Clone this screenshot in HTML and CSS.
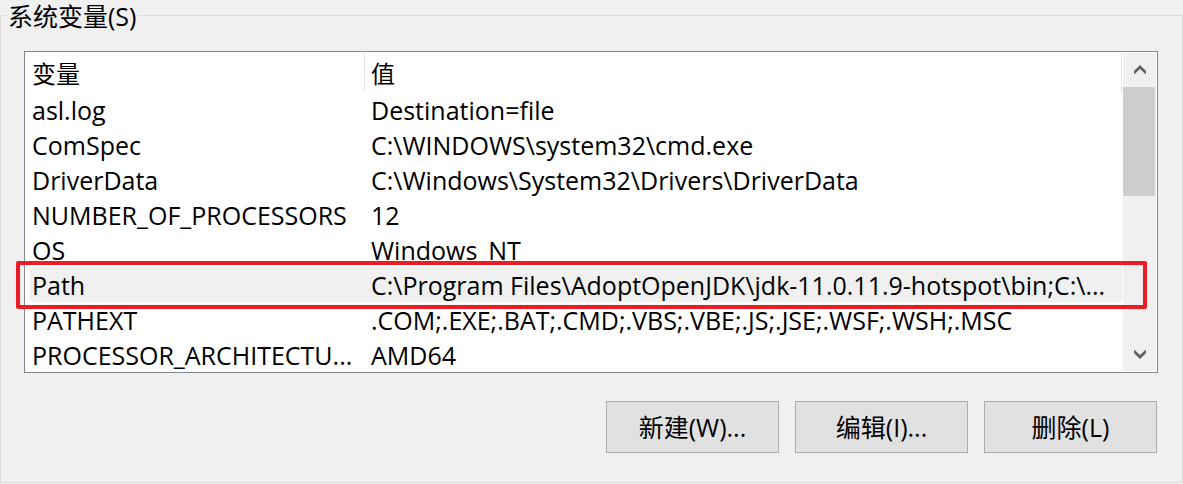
FILE: index.html
```html
<!DOCTYPE html>
<html lang="zh-CN">
<head>
<meta charset="utf-8">
<title>系统变量</title>
<link rel="stylesheet" href="styles.css">
</head>
<body>
<fieldset class="group">
  <legend class="group-title">系统变量(S)</legend>
  <div class="list">
    <div class="list-view">
      <table class="vars">
        <colgroup><col class="col-name"><col></colgroup>
        <thead>
          <tr><th scope="col"><span class="head">变量</span></th><th scope="col"><span class="head">值</span></th></tr>
        </thead>
        <tbody>
          <tr><td>asl.log</td><td>Destination=file</td></tr>
          <tr><td>ComSpec</td><td>C:\WINDOWS\system32\cmd.exe</td></tr>
          <tr><td>DriverData</td><td>C:\Windows\System32\Drivers\DriverData</td></tr>
          <tr><td>NUMBER_OF_PROCESSORS</td><td>12</td></tr>
          <tr><td>OS</td><td>Windows_NT</td></tr>
          <tr class="selected"><td>Path</td><td>C:\Program Files\AdoptOpenJDK\jdk-11.0.11.9-hotspot\bin;C:\...</td></tr>
          <tr><td>PATHEXT</td><td>.COM;.EXE;.BAT;.CMD;.VBS;.VBE;.JS;.JSE;.WSF;.WSH;.MSC</td></tr>
          <tr><td>PROCESSOR_ARCHITECTU...</td><td>AMD64</td></tr>
        </tbody>
      </table>
    </div>
    <div class="scrollbar">
      <button class="scroll-button" type="button" aria-label="向上滚动">
        <svg width="12" height="10" viewBox="0 0 12 10"><path d="M0 6 6 0l6 6v3.500L6 4 0 9.500z" fill="#606060"/></svg>
      </button>
      <div class="thumb"></div>
      <button class="scroll-button scroll-down" type="button" aria-label="向下滚动">
        <svg width="12" height="10" viewBox="0 0 12 10"><path d="M0 .5 6 6l6-5.500V4L6 10 0 4z" fill="#606060"/></svg>
      </button>
    </div>
    <div class="highlight"></div>
  </div>
  <div class="actions">
    <button class="action" type="button">新建(W)...</button>
    <button class="action" type="button">编辑(I)...</button>
    <button class="action" type="button">删除(L)</button>
  </div>
</fieldset>
</body>
</html>
```
FILE: styles.css
```css
* {
  box-sizing: border-box;
}

body {
  margin: 0;
  background: #f0f0f0;
  color: #000;
  font-family: "Open Sans", "Noto Sans CJK SC", sans-serif;
  font-size: 25px;
  line-height: 32px;
}

.group {
  min-width: 0;
  margin: 0;
  padding: 20px 24px 29px 23px;
  border: 1px solid #dcdcdc;
}

.group-title {
  margin-left: -18px;
  padding: 2px 2px 0;
  line-height: 29px;
}

.list {
  position: relative;
  display: flex;
  padding-right: 1px;
  background: #fff;
  border: 1px solid #828790;
}

.list-view {
  flex: 1;
  min-width: 0;
}

.vars {
  width: 100%;
  table-layout: fixed;
  border-collapse: collapse;
}

.col-name {
  width: 340px;
}

.vars th {
  height: 40px;
  padding: 1px 0 0;
  font-size: 24px;
  font-weight: 400;
  text-align: left;
}

.head {
  display: block;
  height: 39px;
  padding: 5px 7px 0;
  border-right: 1px solid #e5e5e5;
}

.vars td {
  height: 35px;
  padding: 0 0 0 7px;
  overflow: hidden;
  white-space: nowrap;
}

.vars th + th .head,
.vars td + td {
  padding-left: 6px;
}

.selected td {
  background: #f0f0f0;
}

.selected td:first-child {
  background: linear-gradient(to right, #fff 5px, #f0f0f0 5px);
}

.scrollbar {
  display: flex;
  flex-direction: column;
  width: 33px;
  margin: 1px 0 1px 1px;
  background: #f0f0f0;
}

.scroll-button {
  display: grid;
  place-items: center;
  height: 34px;
  padding: 0;
  background: none;
  border: 0;
}

.scroll-down {
  margin-top: auto;
}

.thumb {
  height: 109px;
  margin-right: 1px;
  background: #cdcdcd;
}

.highlight {
  position: absolute;
  top: 209px;
  right: 10px;
  left: -9px;
  height: 48px;
  border: 4px solid #ed1c24;
  border-radius: 2px;
}

.actions {
  display: flex;
  justify-content: flex-end;
  gap: 16px;
  margin-top: 28px;
  padding-right: 1px;
}

.action {
  width: 173px;
  height: 52px;
  padding: 0;
  background: #e1e1e1;
  border: 1px solid #adadad;
  color: inherit;
  font: inherit;
}
```
